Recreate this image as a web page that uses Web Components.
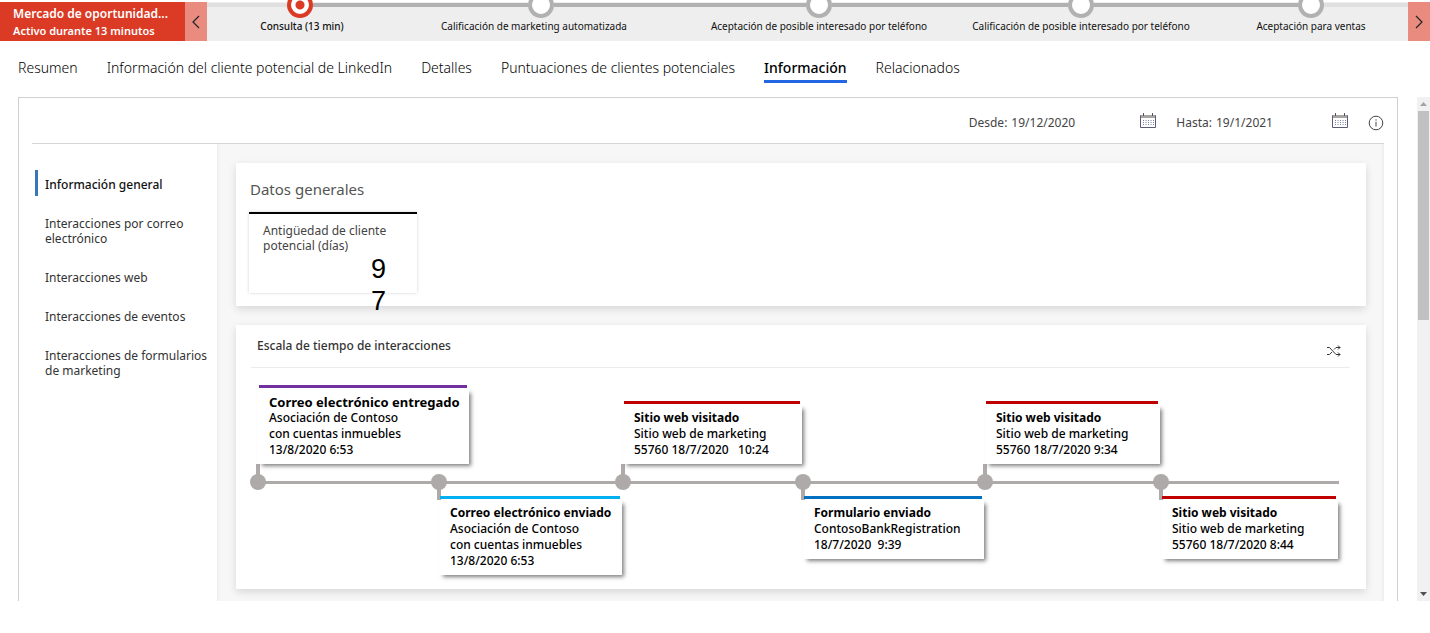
<!DOCTYPE html>
<html lang="es">
<head>
<meta charset="utf-8">
<title>Mercado de oportunidades - Información</title>
<style>
  body { margin: 0; background: #fff; color: #222; font: 12px/16px "Noto Sans", "Open Sans", sans-serif; }
</style>
</head>
<body>
<lead-page></lead-page>

<script>
const base = `<style>
  *, *::before, *::after { box-sizing: border-box; }
  :host { display: block; box-sizing: border-box; }
  ul, h1, h2, h3, p { margin: 0; padding: 0; list-style: none; font: inherit; }
  button { margin: 0; padding: 0; border: 0; background: none; font: inherit; color: inherit; cursor: pointer; }
  a { color: inherit; text-decoration: none; }
  svg { display: block; }
</style>`;

function define(name, html) {
  const template = document.createElement('template');
  customElements.define(name, class extends HTMLElement {
    constructor() {
      super();
      template.innerHTML = base + html;
      this.attachShadow({ mode: 'open' }).append(template.content.cloneNode(true));
    }
  });
}

define('process-bar', `<style>
  :host { display: flex; padding-top: 2px; }
  .flow { display: flex; flex-direction: column; justify-content: center; width: 185px; padding-left: 13px; background: #db3a24; color: #fff; line-height: 17px; }
  .flow h1 { font-weight: 600; white-space: nowrap; }
  .flow p { font-size: 11px; font-weight: 600; white-space: nowrap; }
  .step { display: grid; place-items: center; width: 22px; background: #e98b7f; color: #222; }
  .stages { flex: 1; min-width: 0; padding: 1px 0 7px; background: #eee; }
  .track { display: flex; align-items: center; height: 4px; }
  .track i { height: 4px; background: #b1b1b1; }
  .track i.idle { background: #e0e0e0; }
  .track b { flex: none; width: 26px; height: 26px; border: 4px solid #b1b1b1; border-radius: 50%; background: #fff; }
  .track b.current { border-color: #db3a24; background: radial-gradient(circle, #db3a24 4px, #fff 5px); }
  ul { display: grid; grid-template-columns: 152fr 312fr 258fr 266fr 194fr; padding: 11px 0 0 19px; font-size: 10px; text-align: center; white-space: nowrap; color: #111; }
  .now { font-weight: 500; }
</style>
<div class="flow"><h1>Mercado de oportunidad...</h1><p>Activo durante 13 minutos</p></div>
<button class="step" aria-label="Fase anterior"><svg width="8" height="14" fill="none" stroke="currentColor" stroke-width="1.2"><path d="M7 1 1 7l6 6"/></svg></button>
<div class="stages">
  <div class="track">
    <i class="idle" style="flex:80"></i><b class="current"></b>
    <i style="flex:215"></i><b></b>
    <i style="flex:252"></i><b></b>
    <i style="flex:236"></i><b></b>
    <i style="flex:204"></i><b></b>
    <i class="idle" style="flex:84"></i>
  </div>
  <ul>
    <li class="now"><button>Consulta (13 min)</button></li>
    <li><button>Calificación de marketing automatizada</button></li>
    <li><button>Aceptación de posible interesado por teléfono</button></li>
    <li><button>Calificación de posible interesado por teléfono</button></li>
    <li><button>Aceptación para ventas</button></li>
  </ul>
</div>
<button class="step" aria-label="Fase siguiente"><svg width="8" height="14" fill="none" stroke="currentColor" stroke-width="1.2"><path d="m1 1 6 6-6 6"/></svg></button>`);

define('form-tabs', `<style>
  nav { display: flex; gap: 29px; padding: 17px 18px 15px; font-size: 14px; font-weight: 300; line-height: 20px; white-space: nowrap; color: #000; }
  a { padding-bottom: 2px; border-bottom: 3px solid transparent; margin-bottom: -1px; }
  a[aria-current] { font-weight: 500; border-color: #2266e3; }
</style>
<nav>
  <a href="#resumen">Resumen</a>
  <a href="#linkedin">Información del cliente potencial de LinkedIn</a>
  <a href="#detalles">Detalles</a>
  <a href="#puntuaciones">Puntuaciones de clientes potenciales</a>
  <a href="#informacion" aria-current="page">Información</a>
  <a href="#relacionados">Relacionados</a>
</nav>`);

define('date-range', `<style>
  :host { display: flex; justify-content: flex-end; align-items: center; gap: 20px; height: 46px; padding: 4px 0 0; border-bottom: 1px solid #d6d6d6; color: #444; }
  .field { display: flex; align-items: center; gap: 4px; }
  input { width: 125px; height: 16px; padding: 0; border: 0; outline: 0; background: none; font: inherit; color: inherit; }
  #to { width: 112px; }
  .cal { margin-bottom: 4px; }
</style>
<div class="field"><label for="from">Desde:</label><input id="from" value="19/12/2020">
  <button class="cal" aria-label="Elegir fecha inicial"><svg width="16" height="15" viewBox="0 0 16 15" fill="none"><path d="M.5 2.500h15v12H.5z" stroke="#5b5b78"/><path d="M1 2h14v3H1z" fill="#a8a4a2"/><path d="M3.500 0v3M12.500 0v3" stroke="#555"/><path d="M3 7.500h11M3 9.500h11M3 11.500h11" stroke="#7b83a8" stroke-dasharray="1 1.500"/></svg></button></div>
<div class="field"><label for="to">Hasta:</label><input id="to" value="19/1/2021">
  <button class="cal" aria-label="Elegir fecha final"><svg width="16" height="15" viewBox="0 0 16 15" fill="none"><path d="M.5 2.500h15v12H.5z" stroke="#5b5b78"/><path d="M1 2h14v3H1z" fill="#a8a4a2"/><path d="M3.500 0v3M12.500 0v3" stroke="#555"/><path d="M3 7.500h11M3 9.500h11M3 11.500h11" stroke="#7b83a8" stroke-dasharray="1 1.500"/></svg></button></div>
<button aria-label="Más información"><svg width="16" height="16" fill="none" stroke="#444"><circle cx="8" cy="8" r="6.800"/><path d="M8 6.800v4.700M8 4.300v1.300"/></svg></button>`);

define('insight-nav', `<style>
  ul { display: grid; gap: 24px; padding: 33px 0 0 13px; line-height: 15px; color: #333; }
  li { position: relative; }
  a[aria-current] { font-weight: 500; color: #111; }
  a[aria-current]::before { content: ""; position: absolute; left: -10px; top: -7px; width: 3px; height: 26px; background: #3877b5; }
</style>
<nav><ul>
  <li><a href="#general" aria-current="page">Información general</a></li>
  <li><a href="#correo">Interacciones por correo electrónico</a></li>
  <li><a href="#web">Interacciones web</a></li>
  <li><a href="#eventos">Interacciones de eventos</a></li>
  <li><a href="#formularios">Interacciones de formularios de marketing</a></li>
</ul></nav>`);

define('insight-card', `<style>
  :host { background: #fff; box-shadow: 0 3px 8px rgba(0,0,0,.13); }
</style><slot></slot>`);

define('kpi-tile', `<style>
  :host { width: 168px; height: 81px; padding: 9px 30px 0 14px; border-top: 2px solid #000; box-shadow: 0 0 3px rgba(0,0,0,.18); line-height: 15px; color: #444; }
  .label { margin-right: -12px; }
  .value { width: 16px; margin-left: auto; font: 27px/32px "Liberation Sans", sans-serif; word-break: break-all; color: #000; }
</style>
<p class="label"><slot></slot></p><p class="value"><slot name="value"></slot></p>`);

define('timeline-event', `<style>
  :host { min-width: calc(100% - 1px); width: max-content; padding: 0 9px 6px 11px; font-weight: 500; color: #000; }
  :host::before { content: ""; position: absolute; z-index: -1; inset: 4px 0 0; background: #fff; box-shadow: 3px 3px 4px -1px rgba(0,0,0,.5); }
  .accent { height: 3px; margin: 0 -7px 6px -10px; background: var(--accent); }
  .text { white-space: pre; }
  ::slotted(strong) { display: block; font-weight: 700; }
</style>
<div class="accent"></div><slot name="title"></slot><div class="text"><slot></slot></div>`);

define('timeline-node', `<style>
  :host { position: relative; width: 16px; height: 16px; margin-left: -8px; border-radius: 50%; background: #aeaaaa; }
  :host::after { content: ""; position: absolute; left: 6px; width: 4px; height: 12px; background: #aeaaaa; bottom: 14px; }
  :host([down])::after { bottom: auto; top: 14px; }
</style>`);

define('interaction-timeline', `<style>
  header { display: flex; justify-content: space-between; align-items: flex-end; padding: 10px 9px 10px 6px; border-bottom: 1px solid #ececec; }
  h2 { align-self: flex-start; line-height: 22px; font-weight: 500; color: #333; }
  .map { display: grid; grid-template: auto 36px auto / minmax(0, 181fr) minmax(0, 184fr) minmax(0, 180fr) minmax(0, 182fr) minmax(0, 176fr) minmax(0, 178fr); justify-items: start; padding: 17px 11px 0 7px; }
  .map timeline-event { grid-row: 1; align-self: end; position: relative; z-index: 0; }
  .map .low { grid-row: 3; align-self: start; margin-top: -4px; }
  .axis { grid-area: 2 / 1 / 3 / -1; align-self: center; justify-self: stretch; height: 3px; background: #aeaaaa; }
  .map timeline-node { grid-row: 2; align-self: center; }
  .purple { --accent: #7030a0; } .cyan { --accent: #00b0f0; } .blue { --accent: #0070c0; } .red { --accent: #c00000; }
  .c1 { grid-column: 1; } .c2 { grid-column: 2; } .c3 { grid-column: 3; } .c4 { grid-column: 4; } .c5 { grid-column: 5; } .c6 { grid-column: 6; }
  strong.large { font-size: 13px; }
</style>
<header><h2>Escala de tiempo de interacciones</h2>
<button aria-label="Cambiar vista"><svg width="14" height="12" fill="none" stroke="#333"><path d="M0 2.500h2.500L9 9.500h4M0 9.500h2.500L5 7m2-2.500 2-2h4M11 .5l2 2-2 2M11 7.500l2 2-2 2"/></svg></button></header>
<div class="map">
  <div class="axis"></div>
  <timeline-node class="c1"></timeline-node><timeline-node class="c2" down></timeline-node><timeline-node class="c3"></timeline-node>
  <timeline-node class="c4" down></timeline-node><timeline-node class="c5"></timeline-node><timeline-node class="c6" down></timeline-node>
  <timeline-event class="c1 purple"><strong slot="title" class="large">Correo electrónico entregado</strong>Asociación de Contoso
con cuentas inmuebles
13/8/2020 6:53</timeline-event>
  <timeline-event class="c2 low cyan"><strong slot="title">Correo electrónico enviado</strong>Asociación de Contoso
con cuentas inmuebles
13/8/2020 6:53</timeline-event>
  <timeline-event class="c3 red"><strong slot="title">Sitio web visitado</strong>Sitio web de marketing
55760 18/7/2020   10:24</timeline-event>
  <timeline-event class="c4 low blue"><strong slot="title">Formulario enviado</strong>ContosoBankRegistration
18/7/2020  9:39</timeline-event>
  <timeline-event class="c5 red"><strong slot="title">Sitio web visitado</strong>Sitio web de marketing
55760 18/7/2020 9:34</timeline-event>
  <timeline-event class="c6 low red"><strong slot="title">Sitio web visitado</strong>Sitio web de marketing
55760 18/7/2020 8:44</timeline-event>
</div>`);

define('scroll-rail', `<style>
  :host { display: flex; flex-direction: column; background: #f1f1f1; }
  button { display: grid; place-items: center; height: 14px; }
  .thumb { flex: 209; margin: 0 1px; background: #c1c1c1; }
  .rest { flex: 267; }
</style>
<button aria-label="Subir"><svg width="7" height="4"><path d="M0 4h7L3.500 0z" fill="#a3a3a3"/></svg></button>
<div class="thumb"></div><div class="rest"></div>
<button aria-label="Bajar"><svg width="7" height="4"><path d="M0 0h7L3.500 4z" fill="#505050"/></svg></button>`);

define('insight-panel', `<style>
  :host { padding: 0 13px; border: solid #d0d0d0; border-width: 1px 1px 0; }
  .body { display: grid; grid-template-columns: 185px minmax(0, 1fr); }
  main { display: grid; gap: 19px; padding: 19px 18px 12px 19px; background: #f7f7f7; box-shadow: inset 3px 0 3px -2px rgba(0,0,0,.06), inset -3px 0 3px -2px rgba(0,0,0,.06); }
  .facts { padding: 14px 13px 13px; }
  .facts h2 { margin: 0 0 11px 1px; font-size: 15px; line-height: 24px; color: #555; }
  .times { padding: 0 16px 14px 15px; }
</style>
<date-range></date-range>
<div class="body">
  <insight-nav></insight-nav>
  <main>
    <insight-card class="facts"><h2>Datos generales</h2>
      <kpi-tile>Antigüedad de cliente potencial (días)<span slot="value">97</span></kpi-tile></insight-card>
    <insight-card class="times"><interaction-timeline></interaction-timeline></insight-card>
  </main>
</div>`);

define('lead-page', `<style>
  .view { display: grid; grid-template-columns: minmax(0, 1fr) 13px; gap: 19px; padding-left: 18px; }
</style>
<process-bar></process-bar>
<form-tabs></form-tabs>
<div class="view"><insight-panel></insight-panel><scroll-rail></scroll-rail></div>`);
</script>
</body>
</html>
